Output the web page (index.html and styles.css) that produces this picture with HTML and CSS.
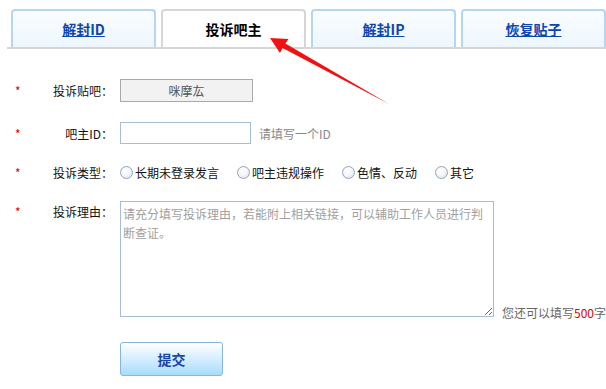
FILE: index.html
```html
<!DOCTYPE html>
<html lang="zh-CN">
<head>
<meta charset="utf-8">
<title>投诉吧主</title>
<link rel="stylesheet" href="styles.css">
</head>
<body>
<div class="page">
  <div class="tabs">
    <div class="tab"><a href="#">解封ID</a></div>
    <div class="tab active"><span>投诉吧主</span></div>
    <div class="tab"><a href="#">解封IP</a></div>
    <div class="tab"><a href="#">恢复贴子</a></div>
  </div>

  <div class="form">
    <div class="row r1">
      <span class="star">*</span>
      <span class="lbl">投诉贴吧：</span>
      <div class="static">咪摩厷</div>
    </div>
    <div class="row r2">
      <span class="star">*</span>
      <span class="lbl">吧主ID：</span>
      <input class="idinput" type="text">
      <span class="hint">请填写一个ID</span>
    </div>
    <div class="row r3">
      <span class="star">*</span>
      <span class="lbl">投诉类型：</span>
      <label class="radio"><span class="dot"></span>长期未登录发言</label>
      <label class="radio"><span class="dot"></span>吧主违规操作</label>
      <label class="radio"><span class="dot"></span>色情、反动</label>
      <label class="radio"><span class="dot"></span>其它</label>
    </div>
    <div class="row r4">
      <span class="star">*</span>
      <span class="lbl">投诉理由：</span>
      <textarea class="reason" placeholder="请充分填写投诉理由，若能附上相关链接，可以辅助工作人员进行判断查证。"></textarea>
      <span class="counter">您还可以填写<span class="num">500</span>字</span>
    </div>
    <div class="row r5">
      <button class="submit" type="button">提交</button>
    </div>
  </div>

  <svg class="arrow" width="606" height="389" viewBox="0 0 606 389">
    <polygon points="270,38 288.5,39 285.4,43.6 389,104 282.6,48 280,53" fill="#f31010"/>
  </svg>
</div>
</body>
</html>
```

FILE: styles.css
```css
html, body {
  margin: 0;
  padding: 0;
  background: #fff;
}

.page {
  position: relative;
  width: 606px;
  height: 389px;
  overflow: hidden;
  font-family: "Noto Sans CJK SC", "Liberation Sans", sans-serif;
  font-size: 12px;
  color: #222;
}

/* tabs */
.tabs {
  display: flex;
  gap: 5px;
  margin-left: 7px;
  padding: 9px 0 0 4px;
  border-bottom: 2px solid #d6d6d6;
}

.tab {
  box-sizing: border-box;
  width: 145px;
  height: 38px;
  border: 2px solid #b5d6f1;
  border-bottom: none;
  border-radius: 4px 4px 0 0;
  background: linear-gradient(#fbfdff, #edf6fd);
  display: flex;
  align-items: center;
  justify-content: center;
  font-size: 14px;
  font-weight: bold;
}

.tab a {
  color: #0c46b0;
  text-decoration: underline;
}

.tab.active {
  border-color: #d6d6d6;
  background: #fff;
  color: #000;
}

/* form */
.form {
  padding-top: 30px;
}

.row {
  display: flex;
  align-items: center;
  margin-bottom: 20px;
}

.star {
  box-sizing: border-box;
  width: 30px;
  padding-left: 15px;
  color: #e00000;
}

.lbl {
  width: 83px;
  margin-right: 7px;
  text-align: right;
  color: #111;
}

.r1 { height: 23px; }
.r2 { height: 22px; }
.r3 { height: 16px; margin-bottom: 21px; }
.r4 { height: 116px; align-items: flex-start; margin-bottom: 25px; }
.r5 { padding-left: 120px; }

.static {
  box-sizing: border-box;
  width: 133px;
  height: 23px;
  border: 1px solid #a9a9a9;
  background: #f2f2f2;
  color: #555;
  display: flex;
  align-items: center;
  justify-content: center;
}

.idinput {
  box-sizing: border-box;
  width: 131px;
  height: 22px;
  margin: 0;
  padding: 0 2px;
  border: 1px solid #a6bed5;
  font: inherit;
}

.hint {
  margin-left: 8px;
  color: #888;
}

.radio {
  display: inline-flex;
  align-items: center;
  margin-right: 18px;
  color: #111;
}

.dot {
  box-sizing: border-box;
  width: 13px;
  height: 13px;
  margin-right: 2px;
  border-radius: 50%;
  border: 1px solid #93a5bd;
  background: radial-gradient(circle at 40% 35%, #ffffff 0%, #f4f6f9 45%, #d5dde8 100%);
}

.r4 .star, .r4 .lbl {
  margin-top: 3px;
  line-height: 16px;
}

.reason {
  box-sizing: border-box;
  width: 374px;
  height: 116px;
  margin: 0;
  padding: 2px 2px;
  border: 1px solid #a6bed5;
  font: inherit;
  line-height: 19px;
  color: #333;
  resize: both;
  overflow: hidden;
}

.reason::placeholder {
  color: #a0a0a0;
}

.counter {
  align-self: flex-end;
  margin-left: 8px;
  margin-bottom: -3px;
  line-height: 14px;
  color: #666;
  white-space: nowrap;
}

.counter .num {
  color: #e00000;
}

.submit {
  box-sizing: border-box;
  width: 103px;
  height: 34px;
  margin: 0;
  border: 1px solid #86b6df;
  border-radius: 3px;
  background: linear-gradient(#ffffff, #a9dcfc);
  font-family: inherit;
  font-size: 14px;
  font-weight: bold;
  color: #1a46aa;
  cursor: pointer;
}

.arrow {
  position: absolute;
  left: 0;
  top: 0;
  pointer-events: none;
}
```
